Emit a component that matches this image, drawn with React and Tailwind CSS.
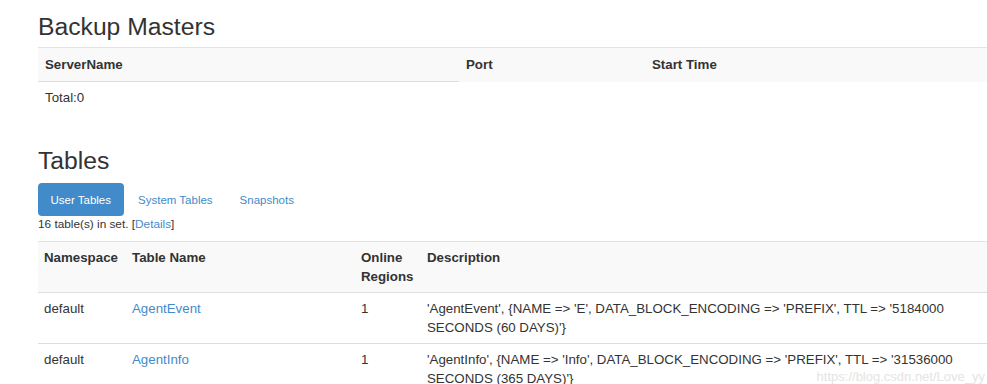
import React from 'react'

const backupCols = [
    { label: 'ServerName', w: 'w-[421px]' },
    { label: 'Port', w: 'w-[186px]' },
    { label: 'Start Time', w: '' },
]

const tables = [
    {
        ns: 'default',
        name: 'AgentEvent',
        regions: '1',
        desc: "'AgentEvent', {NAME => 'E', DATA_BLOCK_ENCODING => 'PREFIX', TTL => '5184000 SECONDS (60 DAYS)'}",
    },
    {
        ns: 'default',
        name: 'AgentInfo',
        regions: '1',
        desc: "'AgentInfo', {NAME => 'Info', DATA_BLOCK_ENCODING => 'PREFIX', TTL => '31536000 SECONDS (365 DAYS)'}",
    },
]

function Tabs() {
    return (
        <ul className="flex items-center text-[11.5px] leading-[17px]">
            <li className="rounded-[4px] bg-[#428bca] px-[12.5px] pt-[9px] pb-[7px] text-white">User Tables</li>
            <li className="ml-[2px] px-[12.5px] pt-[9px] pb-[7px] text-[#428bca]">System Tables</li>
            <li className="ml-[2px] px-[12.5px] pt-[9px] pb-[7px] text-[#428bca]">Snapshots</li>
        </ul>
    )
}

export default function App() {
    return (
        <div className="relative h-[384px] w-full overflow-hidden bg-white font-['Liberation_Sans',Arial,sans-serif] text-[13.3px] leading-[19px] text-[#333]">
            <div className="pl-[38px]">
                {/* backup masters */}
                <h2 className="mt-[14px] mb-[7px] text-[24.7px] leading-[26px] font-normal">Backup Masters</h2>
                <table className="w-[949px] table-fixed border-collapse border-t border-[#e3e3e3]">
                    <thead>
                        <tr className="bg-[#f9f9f9]">
                            {backupCols.map((c) => (
                                <th key={c.label} className={`${c.w} px-[7px] py-[7px] text-left font-bold`}>{c.label}</th>
                            ))}
                        </tr>
                    </thead>
                    <tbody>
                        <tr>
                            <td className="border-t border-[#ddd] px-[7px] py-[6px]">Total:0</td>
                        </tr>
                    </tbody>
                </table>

                {/* tables */}
                <h2 className="mt-[35px] mb-[9px] text-[24.7px] leading-[26px] font-normal">Tables</h2>
                <Tabs />
                <p className="text-[11.8px] leading-[17px]">
                    16 table(s) in set. [<a className="text-[#428bca]">Details</a>]
                </p>
                <table className="mt-[8px] w-[949px] table-fixed border-collapse border-t border-[#e3e3e3]">
                    <thead>
                        <tr className="bg-[#f9f9f9] align-top">
                            <th className="w-[88px] px-[6px] py-[6px] text-left font-bold">Namespace</th>
                            <th className="w-[229px] px-[6px] py-[6px] text-left font-bold">Table Name</th>
                            <th className="w-[66px] px-[6px] py-[6px] text-left font-bold">Online Regions</th>
                            <th className="px-[6px] py-[6px] text-left font-bold">Description</th>
                        </tr>
                    </thead>
                    <tbody>
                        {tables.map((t) => (
                            <tr key={t.name} className="align-top">
                                <td className="border-t border-[#ddd] px-[6px] py-[6px]">{t.ns}</td>
                                <td className="border-t border-[#ddd] px-[6px] py-[6px] text-[#428bca]">{t.name}</td>
                                <td className="border-t border-[#ddd] px-[6px] py-[6px]">{t.regions}</td>
                                <td className="border-t border-[#ddd] px-[6px] py-[6px]">{t.desc}</td>
                            </tr>
                        ))}
                    </tbody>
                </table>
            </div>

            {/* screenshot watermark */}
            <span className="absolute right-[2px] bottom-[-2px] text-[13px] text-[#e4e4e4]">https://blog.csdn.net/Love_yy</span>
        </div>
    )
}
